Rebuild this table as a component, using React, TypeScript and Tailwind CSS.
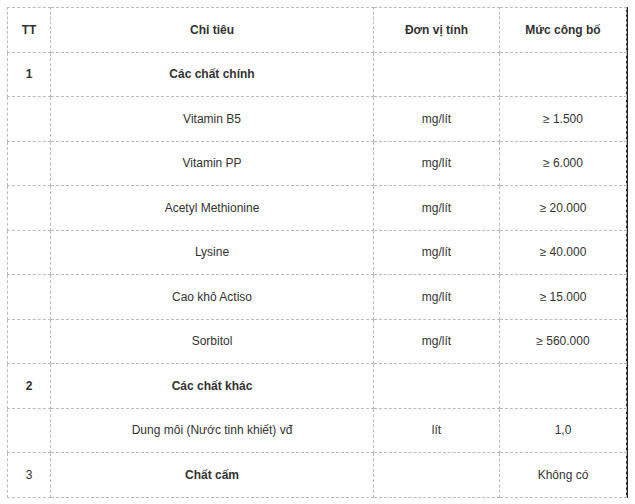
import React from "react";

type Row = {
  tt?: string;
  name: string;
  unit?: string;
  value?: string;
  group?: boolean;
  ttBold?: boolean;
};

const rows: Row[] = [
  { tt: "1", name: "Các chất chính", group: true, ttBold: true },
  { name: "Vitamin B5", unit: "mg/lít", value: "≥ 1.500" },
  { name: "Vitamin PP", unit: "mg/lít", value: "≥ 6.000" },
  { name: "Acetyl Methionine", unit: "mg/lít", value: "≥ 20.000" },
  { name: "Lysine", unit: "mg/lít", value: "≥ 40.000" },
  { name: "Cao khô Actiso", unit: "mg/lít", value: "≥ 15.000" },
  { name: "Sorbitol", unit: "mg/lít", value: "≥ 560.000" },
  { tt: "2", name: "Các chất khác", group: true, ttBold: true },
  { name: "Dung môi (Nước tinh khiết) vđ", unit: "lít", value: "1,0" },
  { tt: "3", name: "Chất cấm", value: "Không có", group: true },
];

const cell = "border border-dashed border-[#bbb] text-center align-middle p-0";

const App = () => {
  return (
    <div
      className="w-[635px] h-[504px] bg-white pt-[7px] pl-[7px] text-[12px] text-[#333]"
      style={{ fontFamily: '"Liberation Sans", Arial, sans-serif' }}
    >
      <div className="w-[621px] border-r-2 border-[#222]">
        <table className="w-[619px] border-collapse table-fixed">
          <colgroup>
            <col className="w-[43px]" />
            <col className="w-[323px]" />
            <col className="w-[126px]" />
            <col className="w-[127px]" />
          </colgroup>
          <tbody>
            <tr className="h-[44.5px] font-bold">
              <td className={cell}>TT</td>
              <td className={cell}>Chỉ tiêu</td>
              <td className={cell}>Đơn vị tính</td>
              <td className={cell}>Mức công bố</td>
            </tr>
            {rows.map((row, id) => (
              <tr key={id} className="h-[44.5px]">
                <td className={`${cell} ${row.ttBold ? "font-bold" : ""}`}>{row.tt}</td>
                <td className={`${cell} ${row.group ? "font-bold" : ""}`}>
                  {row.name}
                </td>
                <td className={cell}>{row.unit}</td>
                <td className={cell}>{row.value}</td>
              </tr>
            ))}
          </tbody>
        </table>
      </div>
    </div>
  );
};

export default App;
